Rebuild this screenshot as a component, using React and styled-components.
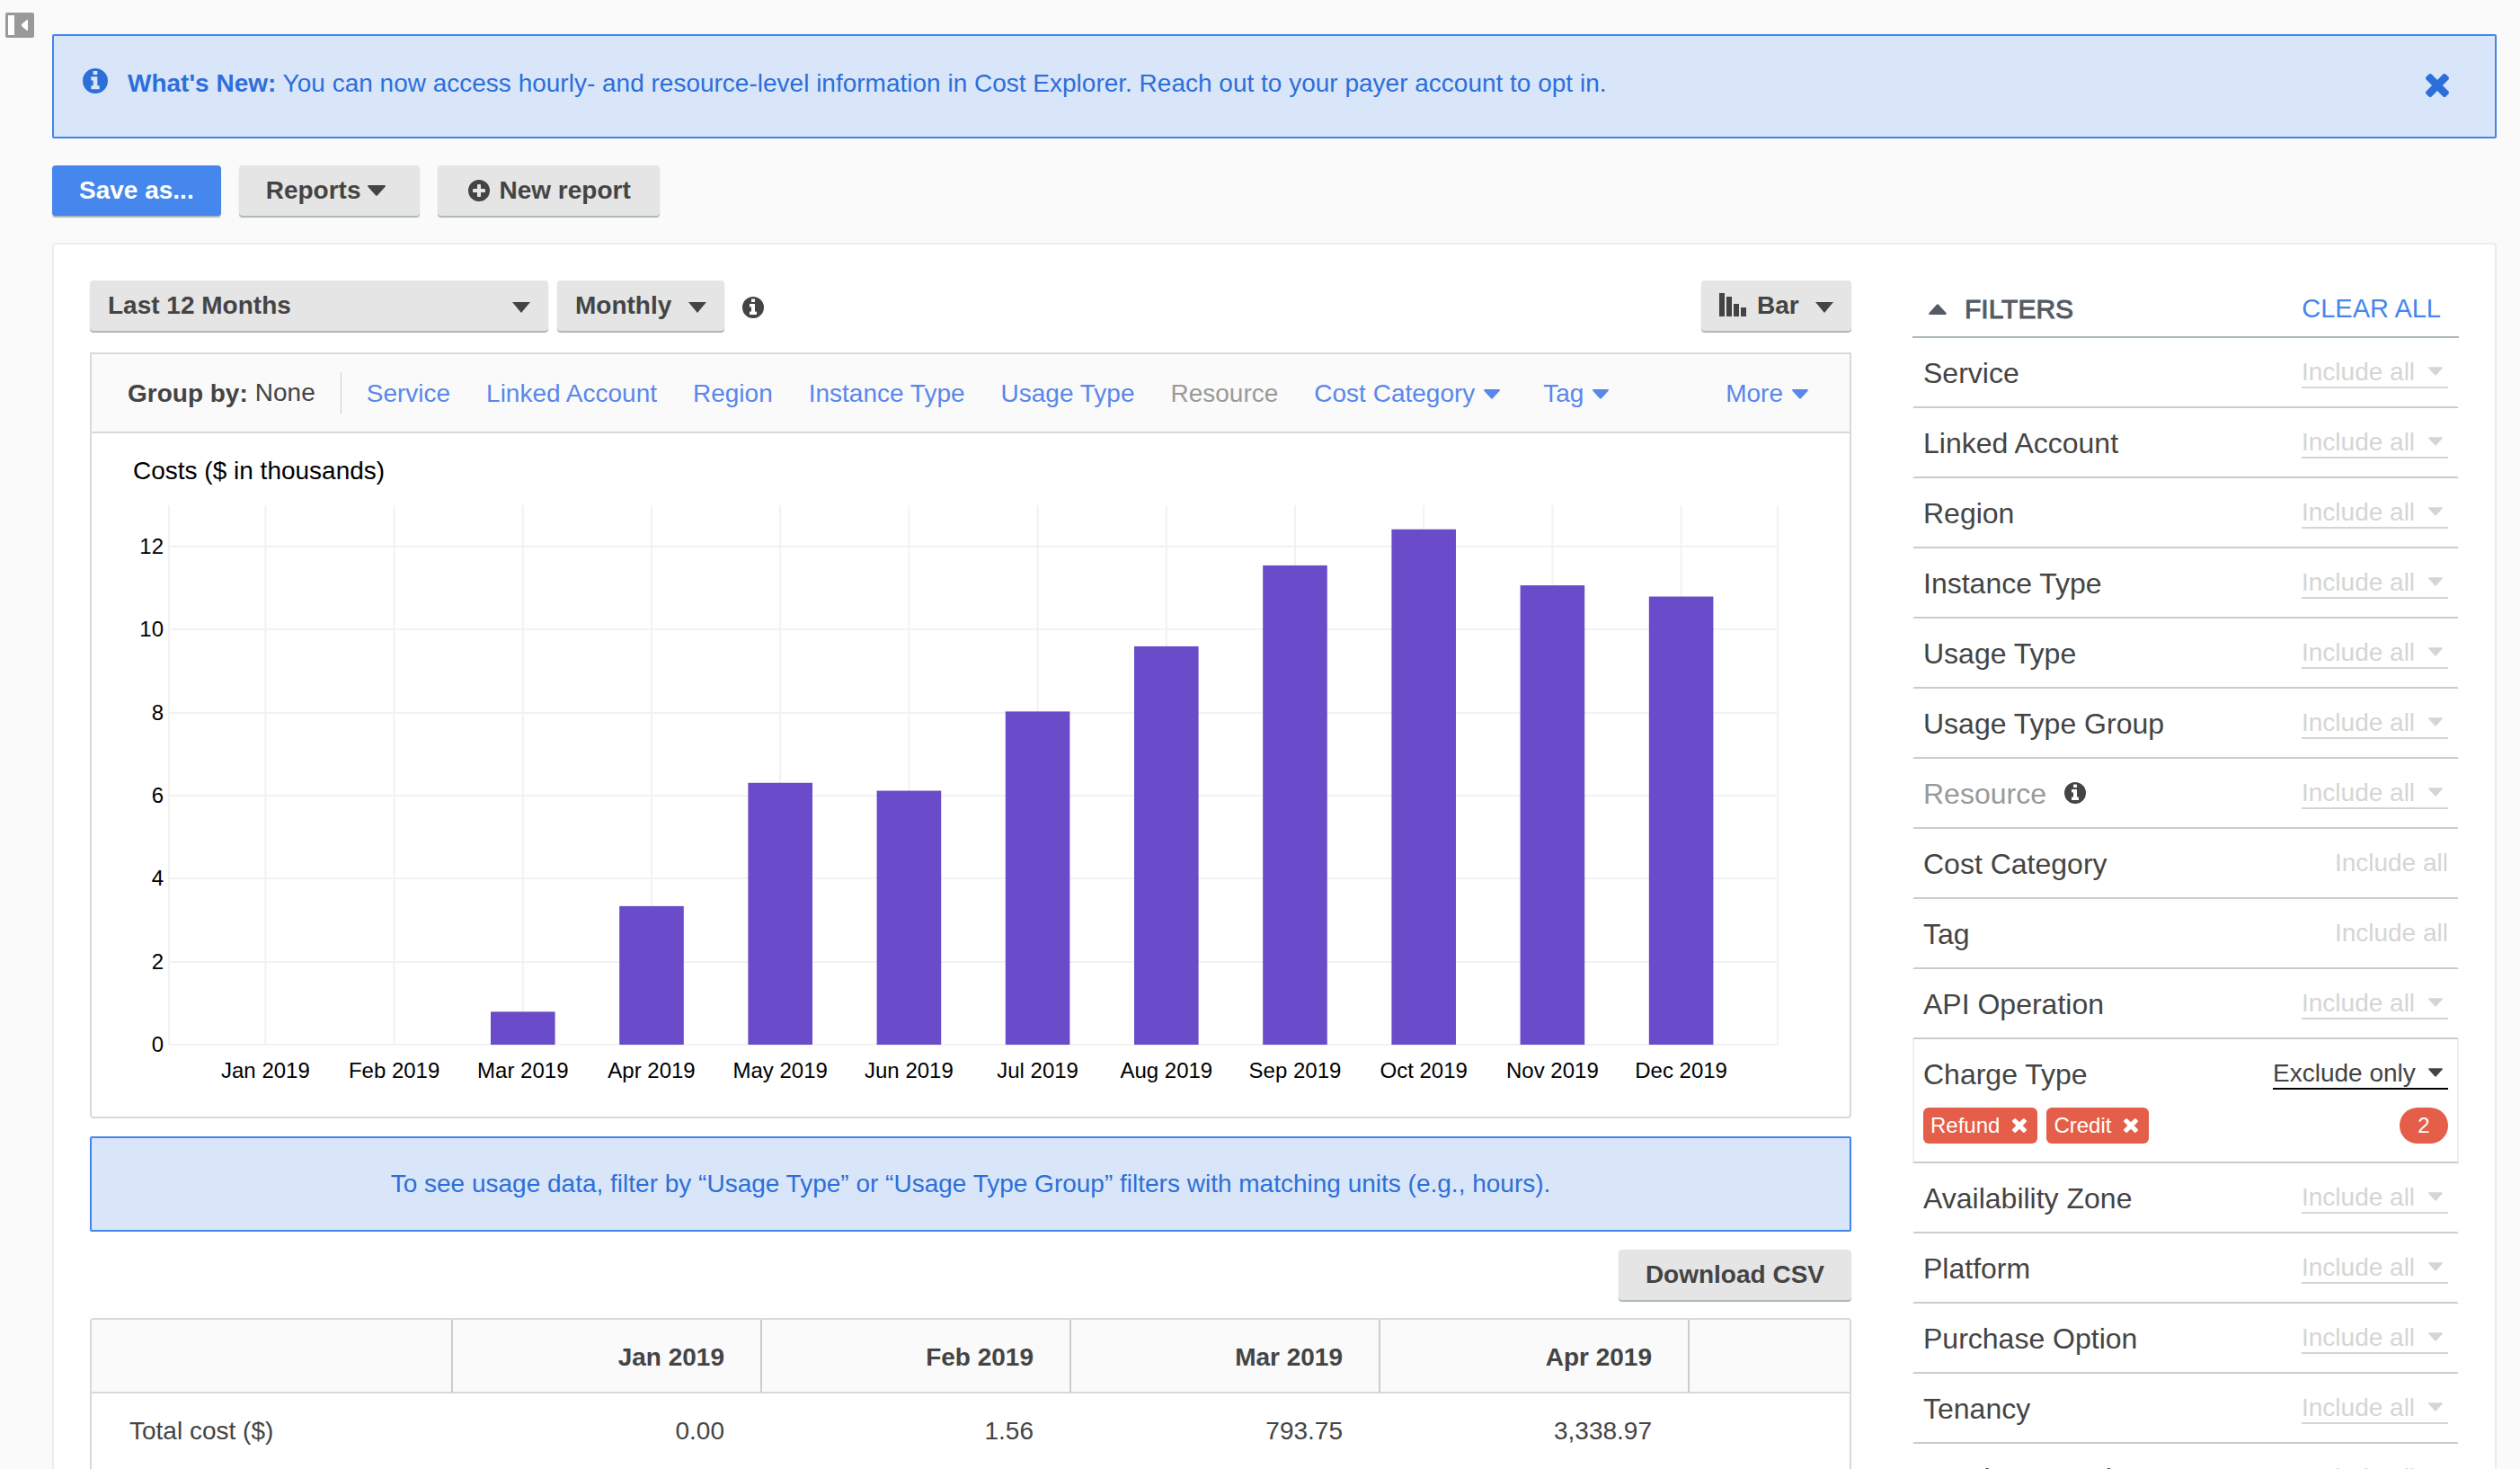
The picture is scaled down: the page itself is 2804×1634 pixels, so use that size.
import React from "react";
import styled, { createGlobalStyle } from "styled-components";

const GlobalStyle = createGlobalStyle`
  *, *::before, *::after { box-sizing: border-box; }
  body {
    margin: 0;
    background: #fafafa;
    color: #444;
    font: 28px/36px "Liberation Sans", Arial, sans-serif;
  }
  button, select { font: inherit; color: inherit; margin: 0; cursor: pointer; }
  a { color: inherit; text-decoration: none; }
  svg { display: block; flex: none; }
`;

const INFO =
  "M1152 1376v-160q0-14-9-23t-23-9h-96v-512q0-14-9-23t-23-9h-320q-14 0-23 9t-9 23v160q0 14 9 23t23 9h96v320h-96q-14 0-23 9t-9 23v160q0 14 9 23t23 9h448q14 0 23-9t9-23zM1024 480v-160q0-14-9-23t-23-9h-192q-14 0-23 9t-9 23v160q0 14 9 23t23 9h192q14 0 23-9t9-23z";
const PLUS =
  "M1344 960v-128q0-26-19-45t-45-19h-256v-256q0-26-19-45t-45-19h-128q-26 0-45 19t-19 45v256h-256q-26 0-45 19t-19 45v128q0 26 19 45t45 19h256v256q0 26 19 45t45 19h128q26 0 45-19t19-45v-256h256q26 0 45-19t19-45z";

const DiscIcon = ({ mark, size = 24 }) => (
  <svg width={size} height={size} viewBox="128 128 1536 1536" fill="currentColor" aria-hidden="true">
    <path fillRule="evenodd" d={mark + "M1664 896a768 768 0 1 1-1536 0a768 768 0 1 1 1536 0z"} />
  </svg>
);
const CloseIcon = ({ size }) => (
  <svg width={size} height={size} viewBox="302 366 1188 1188" fill="currentColor" aria-hidden="true">
    <path d="M1490 1322q0 40-28 68l-136 136q-28 28-68 28t-68-28l-294-294-294 294q-28 28-68 28t-68-28l-136-136q-28-28-28-68t28-68l294-294-294-294q-28-28-28-68t28-68l136-136q28-28 68-28t68 28l294 294 294-294q28-28 68-28t68 28l136 136q28 28 28 68t-28 68l-294 294 294 294q28 28 28 68z" />
  </svg>
);
const CARETS = {
  down: "M1 0Q-.5.5.6 2L9 11.300Q10 12.300 11 11.300L19.400 2Q20.500.5 19 0Z",
  up: "M1 12Q-.5 11.500 .6 10L9 .7Q10 -.3 11 .7L19.400 10Q20.500 11.500 19 12Z",
  sharp: "M0 0H20L10 12Z",
};
const Caret = ({ width = 20, shape = "down" }) => (
  <svg width={width} height={Math.round(width * 0.6)} viewBox="0 0 20 12" fill="currentColor" aria-hidden="true">
    <path d={CARETS[shape]} />
  </svg>
);
const BarsIcon = () => (
  <svg width="30" height="26" viewBox="0 0 30 26" fill="currentColor" aria-hidden="true">
    <path d="M0 0h6v26H0zM8 4h6v22H8zM16 12h6v14h-6zM24 16h6v10h-6z" />
  </svg>
);

const Page = styled.div`
  display: flex;
  align-items: flex-start;
  height: 100vh;
  overflow: hidden;
  padding: 14px 26px 0 6px;
`;
const PanelToggle = styled.button`
  border: 0;
  padding: 0;
  background: none;
  color: #999;
`;
const Content = styled.main`
  flex: 1;
  min-width: 0;
  padding: 24px 0 0 20px;
`;
const Banner = styled.section`
  display: flex;
  align-items: flex-start;
  gap: 22px;
  height: 116px;
  padding: 35px 51px 0 32px;
  border: 2px solid #4285eb;
  border-radius: 2px;
  background: #d9e6fa;
  color: #2d6fd9;
  > p { flex: 1; margin: 0; }
`;
const BannerIcon = styled.span`
  padding-top: 1px;
`;
const DismissButton = styled.button`
  border: 0;
  padding: 7px 0 0;
  background: none;
`;
const Actions = styled.div`
  display: flex;
  gap: 20px;
  margin: 30px 0;
`;
const Button = styled.button`
  display: inline-flex;
  align-items: center;
  gap: ${(p) => p.$gap || 10}px;
  height: 56px;
  padding: ${(p) => p.$padding || "0 30px"};
  border: 0;
  border-radius: 4px;
  background: ${(p) => (p.$primary ? "#4587ec" : "#e5e5e5")};
  color: ${(p) => (p.$primary ? "#fff" : "#444")};
  font-weight: bold;
  box-shadow: 0 2px 1px #aab7b8;
`;
const Card = styled.div`
  display: flex;
  gap: 68px;
  padding: 40px;
  border: 2px solid #ececec;
  border-radius: 4px;
  background: #fff;
`;
const Report = styled.section`
  flex: 1;
  min-width: 0;
`;
const Toolbar = styled.div`
  display: flex;
  align-items: center;
  gap: 10px;
  margin-bottom: 24px;
  > svg { margin: 4px 0 0 10px; }
`;
const Push = styled.div`
  margin-left: auto;
`;
const SelectBox = styled.div`
  display: grid;
  align-items: center;
  width: ${(p) => p.$width}px;
  height: 56px;
  border-radius: 4px;
  background: #e5e5e5;
  box-shadow: 0 2px 1px #aab7b8;
  > * { grid-area: 1 / 1; }
  > svg { pointer-events: none; }
  > svg:last-child { justify-self: end; margin: 4px 20px 0 0; }
  > svg:first-child { margin: 0 0 2px 20px; }
`;
const BoxSelect = styled.select`
  appearance: none;
  width: 100%;
  height: 56px;
  padding: 0 50px 0 ${(p) => (p.$icon ? 62 : 20)}px;
  border: 0;
  background: none;
  font-weight: bold;
`;
const GroupBar = styled.nav`
  display: flex;
  align-items: center;
  height: 90px;
  padding: 0 38px 0 40px;
  border: 2px solid #d5dbdb;
  background: #fafafa;
  color: #5a87ea;
`;
const GroupLabel = styled.div`
  display: flex;
  align-items: center;
  gap: 8px;
  height: 46px;
  margin-right: 28px;
  padding-right: 28px;
  border-right: 1px solid #ccc;
  color: #444;
  b { padding-top: 2px; }
`;
const GroupOptions = styled.div`
  flex: 1;
  display: flex;
  gap: 40px;
  padding-top: 2px;
  > :last-child { margin-left: auto; }
`;
const GroupLink = styled.a`
  display: flex;
  align-items: center;
  gap: 10px;
  padding-right: ${(p) => (p.$menu ? 8 : 0)}px;
  color: ${(p) => (p.$disabled ? "#999" : "inherit")};
`;
const ChartBox = styled.figure`
  margin: 0 0 20px;
  padding: 24px 80px 80px 86px;
  border: 2px solid #d5dbdb;
  border-top: 0;
  border-radius: 0 0 4px 4px;
  color: #000;
  figcaption { margin: 0 -40px 20px; }
  svg { overflow: visible; font-size: 24px; }
`;
const Notice = styled.p`
  margin: 0 0 20px;
  padding: 33px 20px;
  border: 2px solid #4285eb;
  border-radius: 2px;
  background: #d9e6fa;
  color: #2d6fd9;
  text-align: center;
`;
const TableTools = styled.div`
  display: flex;
  justify-content: flex-end;
  margin-bottom: 20px;
`;
const TableFrame = styled.div`
  overflow: hidden;
  border: 2px solid #d5dbdb;
  border-radius: 4px;
`;
const CostTable = styled.table`
  width: 2122px;
  table-layout: fixed;
  border-collapse: separate;
  border-spacing: 0;
  th, td { padding: 24px 42px 20px; text-align: right; }
  thead > tr > * {
    padding-right: 40px;
    border-right: 2px solid #ccc;
    border-bottom: 2px solid #d5dbdb;
    background: #fafafa;
  }
  thead td { width: 402px; }
  tbody > tr > * { padding-bottom: 40px; }
  tbody th { font-weight: normal; text-align: left; }
`;
const Filters = styled.aside`
  flex: none;
  width: 608px;
`;
const FiltersHead = styled.header`
  display: flex;
  align-items: center;
  justify-content: space-between;
  height: 64px;
  padding: 0 20px 0 18px;
  border-bottom: 2px solid #aab7b8;
  color: #545b64;
  h2 {
    display: flex;
    align-items: center;
    gap: 20px;
    margin: 0;
    padding-top: 2px;
    font-size: 30px;
    font-weight: normal;
    -webkit-text-stroke: 1px;
  }
  a { color: #4587ec; font-size: 29px; }
`;
const FilterItem = styled.div`
  padding: 20px 10px;
  border: 2px solid ${(p) => (p.$active ? "#eee" : "transparent")};
  border-top: 0;
  border-bottom-color: #ccc;
`;
const FilterRow = styled.div`
  display: flex;
  align-items: center;
  gap: 20px;
  height: 36px;
`;
const FilterName = styled.label`
  padding-top: 2px;
  font-size: 32px;
  color: ${(p) => (p.$disabled ? "#999" : "#444")};
`;
const FilterSelect = styled.span`
  display: grid;
  align-items: center;
  margin-left: auto;
  border-bottom: 2px solid ${(p) => (p.$active ? "#000" : "#d5d5d5")};
  color: ${(p) => (p.$active ? "#444" : "#d5d5d5")};
  > * { grid-area: 1 / 1; }
  > svg { justify-self: end; margin-right: 6px; pointer-events: none; }
  select {
    appearance: none;
    height: 34px;
    padding: 2px 36px 0 0;
    border: 0;
    background: none;
    line-height: 32px;
  }
`;
const FilterValue = styled.span`
  margin-left: auto;
  color: #d5d5d5;
`;
const Chips = styled.div`
  display: flex;
  gap: 10px;
  padding-top: 20px;
  font-size: 24px;
  color: #fff;
`;
const Chip = styled.button`
  display: flex;
  align-items: center;
  gap: 14px;
  height: 40px;
  padding: 0 12px 0 8px;
  border: 0;
  border-radius: 6px;
  background: #e55e49;
`;
const Count = styled.span`
  width: 54px;
  margin-left: auto;
  border-radius: 20px;
  background: #e55e49;
  line-height: 40px;
  text-align: center;
`;

const COSTS = [
  ["Jan", 0],
  ["Feb", 0.00156],
  ["Mar", 0.79375],
  ["Apr", 3.33897],
  ["May", 6.31],
  ["Jun", 6.12],
  ["Jul", 8.03],
  ["Aug", 9.6],
  ["Sep", 11.55],
  ["Oct", 12.42],
  ["Nov", 11.07],
  ["Dec", 10.8],
];
const TABLE_COLUMNS = [
  ["Jan", "0.00"],
  ["Feb", "1.56"],
  ["Mar", "793.75"],
  ["Apr", "3,338.97"],
  ["May", ""],
];

const PLOT_HEIGHT = 600;
const MAX_COST = 13;
const TICKS = [0, 2, 4, 6, 8, 10, 12];
const SLOTS = COSTS.length + 0.5;
const xAt = (slot) => `${(slot / SLOTS) * 100}%`;
const yAt = (value) => PLOT_HEIGHT - (value / MAX_COST) * PLOT_HEIGHT;

function CostChart() {
  return (
    <svg width="100%" height={PLOT_HEIGHT} role="img" aria-label="Monthly costs">
      <g stroke="#f2f2f2" strokeWidth="2">
        {[0, ...COSTS.map((_, i) => i + 0.75), SLOTS].map((slot) => (
          <line key={slot} x1={xAt(slot)} x2={xAt(slot)} y1="0" y2={PLOT_HEIGHT} />
        ))}
        {TICKS.map((v) => (
          <line key={v} x1="0" x2="100%" y1={Math.round(yAt(v))} y2={Math.round(yAt(v))} />
        ))}
      </g>
      {TICKS.map((v) => (
        <text key={v} x="-6" y={Math.round(yAt(v)) + 8} textAnchor="end">{v}</text>
      ))}
      {COSTS.map(([month, value], i) => (
        <g key={month}>
          {value > 0.1 && (
            <rect x={xAt(i + 0.5)} y={yAt(value)} width={xAt(0.5)} height={PLOT_HEIGHT - yAt(value)} fill="#6a4bc9" />
          )}
          <text x={xAt(i + 0.75)} y={PLOT_HEIGHT + 37} textAnchor="middle">{month} 2019</text>
        </g>
      ))}
    </svg>
  );
}

const GROUPS = [
  { name: "Service" },
  { name: "Linked Account" },
  { name: "Region" },
  { name: "Instance Type" },
  { name: "Usage Type" },
  { name: "Resource", disabled: true },
  { name: "Cost Category", menu: true },
  { name: "Tag", menu: true },
  { name: "More", menu: true },
];

const FILTERS = [
  { name: "Service" },
  { name: "Linked Account" },
  { name: "Region" },
  { name: "Instance Type" },
  { name: "Usage Type" },
  { name: "Usage Type Group" },
  { name: "Resource", disabled: true },
  { name: "Cost Category", plain: true },
  { name: "Tag", plain: true },
  { name: "API Operation" },
  { name: "Charge Type", excluded: ["Refund", "Credit"] },
  { name: "Availability Zone" },
  { name: "Platform" },
  { name: "Purchase Option" },
  { name: "Tenancy" },
  { name: "Database Engine" },
];

function Filter({ name, disabled, plain, excluded }) {
  const id = "filter-" + name.toLowerCase().replace(/ /g, "-");
  return (
    <FilterItem $active={!!excluded}>
      <FilterRow>
        <FilterName htmlFor={plain ? undefined : id} as={plain ? "span" : "label"} $disabled={disabled}>{name}</FilterName>
        {disabled && <DiscIcon mark={INFO} />}
        {plain ? (
          <FilterValue>Include all</FilterValue>
        ) : (
          <FilterSelect $active={!!excluded}>
            <select id={id}>
              <option>{excluded ? "Exclude only" : "Include all"}</option>
            </select>
            <Caret width={16} />
          </FilterSelect>
        )}
      </FilterRow>
      {excluded && (
        <Chips>
          {excluded.map((value) => (
            <Chip key={value}>
              {value}
              <CloseIcon size={16} />
            </Chip>
          ))}
          <Count>{excluded.length}</Count>
        </Chips>
      )}
    </FilterItem>
  );
}

export default function App() {
  return (
    <Page>
      <GlobalStyle />
      <PanelToggle aria-label="Toggle side panel">
        <svg width="32" height="28" viewBox="0 0 32 28" fill="currentColor">
          <rect width="32" height="28" rx="2" />
          <path d="M3 3h7v22H3zM25 8v12h-1l-6-5v-2l6-5z" fill="#fff" />
        </svg>
      </PanelToggle>
      <Content>
        <Banner>
          <BannerIcon><DiscIcon mark={INFO} size={28} /></BannerIcon>
          <p>
            <b>What's New:</b> You can now access hourly- and resource-level information in Cost Explorer. Reach out to your payer account to opt in.
          </p>
          <DismissButton aria-label="Dismiss"><CloseIcon size={26} /></DismissButton>
        </Banner>
        <Actions>
          <Button $primary>Save as...</Button>
          <Button $gap={8} $padding="0 38px 0 30px">Reports <Caret /></Button>
          <Button $padding="0 32px 0 34px"><DiscIcon mark={PLUS} />New report</Button>
        </Actions>
        <Card>
          <Report>
            <Toolbar>
              <SelectBox $width={510}>
                <BoxSelect aria-label="Date range"><option>Last 12 Months</option></BoxSelect>
                <Caret shape="sharp" />
              </SelectBox>
              <SelectBox $width={186}>
                <BoxSelect aria-label="Granularity"><option>Monthly</option></BoxSelect>
                <Caret shape="sharp" />
              </SelectBox>
              <DiscIcon mark={INFO} />
              <Push>
                <SelectBox $width={167}>
                  <BarsIcon />
                  <BoxSelect $icon aria-label="Chart style"><option>Bar</option></BoxSelect>
                  <Caret shape="sharp" />
                </SelectBox>
              </Push>
            </Toolbar>
            <GroupBar>
              <GroupLabel><b>Group by:</b> None</GroupLabel>
              <GroupOptions>
                {GROUPS.map((g) => (
                  <GroupLink key={g.name} href="#" $disabled={g.disabled} $menu={g.menu}>
                    {g.name}
                    {g.menu && <Caret width={18} />}
                  </GroupLink>
                ))}
              </GroupOptions>
            </GroupBar>
            <ChartBox>
              <figcaption>Costs ($ in thousands)</figcaption>
              <CostChart />
            </ChartBox>
            <Notice>To see usage data, filter by “Usage Type” or “Usage Type Group” filters with matching units (e.g., hours).</Notice>
            <TableTools>
              <Button>Download CSV</Button>
            </TableTools>
            <TableFrame>
              <CostTable>
                <thead>
                  <tr>
                    <td />
                    {TABLE_COLUMNS.map(([month]) => <th key={month} scope="col">{month} 2019</th>)}
                  </tr>
                </thead>
                <tbody>
                  <tr>
                    <th scope="row">Total cost ($)</th>
                    {TABLE_COLUMNS.map(([month, amount]) => <td key={month}>{amount}</td>)}
                  </tr>
                </tbody>
              </CostTable>
            </TableFrame>
          </Report>
          <Filters>
            <FiltersHead>
              <h2><Caret shape="up" />FILTERS</h2>
              <a href="#">CLEAR ALL</a>
            </FiltersHead>
            {FILTERS.map((f) => <Filter key={f.name} {...f} />)}
          </Filters>
        </Card>
      </Content>
    </Page>
  );
}
